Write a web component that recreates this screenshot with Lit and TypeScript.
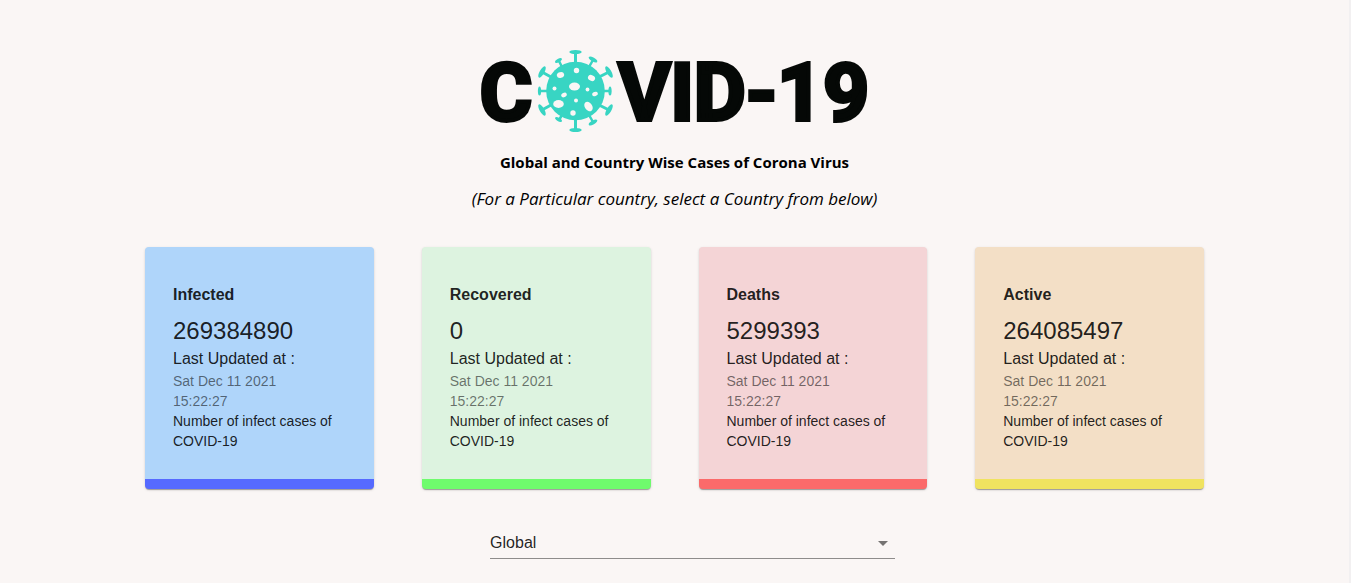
import { LitElement, html, css } from "lit";
import { customElement, property, state } from "lit/decorators.js";

interface Stat {
  kind: string;
  title: string;
  value: number;
}

const STATS: Stat[] = [
  { kind: "infected", title: "Infected", value: 269384890 },
  { kind: "recovered", title: "Recovered", value: 0 },
  { kind: "deaths", title: "Deaths", value: 5299393 },
  { kind: "active", title: "Active", value: 264085497 },
];

@customElement("covid-logo")
export class CovidLogo extends LitElement {
  static styles = css`
    :host {
      display: block;
    }
    .mark {
      display: flex;
      align-items: flex-start;
      justify-content: center;
      margin: 0;
      color: #050806;
      font: bold 80px/88px Roboto, "Liberation Sans", sans-serif;
      -webkit-text-stroke: 4px #050806;
      white-space: nowrap;
    }
    .virus {
      flex: none;
      width: 78px;
      height: 84px;
      margin: 0 4px;
    }
  `;

  render() {
    return html`
      <h1 class="mark" aria-label="COVID-19">
        <span>C</span>
        <svg class="virus" viewBox="0 0 78 84" aria-hidden="true">
          <g stroke="#38d5c3" fill="none" stroke-linecap="round">
            <path stroke-width="3" d="M39.500 15V3M39.500 69V81M15 28L6 23M63 28L73 23M15 56L6 61M63 56L73 61" />
            <path stroke-width="2.500" d="M26 18L23 12M53 18L57 11M26 66L23 71M53 66L57 73M12 42H4M67 42H74" />
          </g>
          <g fill="#38d5c3">
            <ellipse cx="39.500" cy="3" rx="6.200" ry="2" />
            <ellipse cx="39.500" cy="81" rx="6.200" ry="2" />
            <ellipse cx="6" cy="23" rx="6.400" ry="2.300" transform="rotate(-60 6 23)" />
            <ellipse cx="73" cy="23" rx="6.400" ry="2.300" transform="rotate(60 73 23)" />
            <ellipse cx="6" cy="61" rx="6.400" ry="2.300" transform="rotate(60 6 61)" />
            <ellipse cx="73" cy="61" rx="6.400" ry="2.300" transform="rotate(-60 73 61)" />
            <ellipse cx="22.500" cy="11.500" rx="3.800" ry="1.700" transform="rotate(-30 22.500 11.500)" />
            <ellipse cx="57" cy="10.500" rx="4.800" ry="1.900" transform="rotate(30 57 10.500)" />
            <ellipse cx="22.500" cy="70.500" rx="3.800" ry="1.700" transform="rotate(30 22.500 70.500)" />
            <ellipse cx="57" cy="73.500" rx="4.800" ry="1.900" transform="rotate(-30 57 73.500)" />
            <ellipse cx="3.500" cy="42" rx="1.600" ry="4.500" />
            <ellipse cx="74" cy="42" rx="1.600" ry="4.500" />
            <circle cx="39.500" cy="42" r="29.300" />
          </g>
          <g fill="#faf6f5">
            <ellipse cx="24.500" cy="26" rx="3.700" ry="2.900" transform="rotate(-15 24.500 26)" />
            <circle cx="40.500" cy="21.500" r="2.700" />
            <ellipse cx="55.500" cy="29" rx="3.700" ry="2.800" transform="rotate(25 55.500 29)" />
            <ellipse cx="38.500" cy="37.500" rx="5.500" ry="4" />
            <circle cx="18.500" cy="39.500" r="2" />
            <circle cx="51.500" cy="40.500" r="1.900" />
            <ellipse cx="59" cy="45" rx="2.900" ry="2" transform="rotate(-20 59 45)" />
            <ellipse cx="28" cy="46" rx="2.900" ry="2.100" transform="rotate(-25 28 46)" />
            <circle cx="40" cy="51.500" r="2" />
            <ellipse cx="22.500" cy="55" rx="5.300" ry="3.900" />
            <ellipse cx="52.500" cy="57.500" rx="3.700" ry="5.200" transform="rotate(-35 52.500 57.500)" />
            <circle cx="37" cy="64" r="2.700" />
          </g>
        </svg>
        <span>VID-19</span>
      </h1>
    `;
  }
}

@customElement("stat-card")
export class StatCard extends LitElement {
  static styles = css`
    :host {
      display: block;
    }
    .card {
      overflow: hidden;
      border-bottom: 10px solid var(--accent);
      border-radius: 4px;
      padding: 28px;
      background: var(--tint);
      box-shadow: 0 2px 1px -1px rgba(0, 0, 0, 0.2), 0 1px 1px rgba(0, 0, 0, 0.14), 0 1px 3px rgba(0, 0, 0, 0.12);
      color: rgba(0, 0, 0, 0.87);
      font: 14px/20px "Liberation Sans", Arial, sans-serif;
    }
    .title {
      margin: 8px 0;
      font-size: 16px;
      line-height: 24px;
    }
    .value,
    .caption,
    .date,
    .note {
      margin: 0;
    }
    .value {
      font-size: 24px;
      line-height: 32px;
    }
    .caption {
      font-size: 16px;
      line-height: 24px;
    }
    .date {
      color: rgba(0, 0, 0, 0.54);
    }
    .day,
    .time {
      display: block;
    }
  `;

  @property() title = "";
  @property({ type: Number }) value = 0;

  render() {
    return html`
      <article class="card">
        <h2 class="title">${this.title}</h2>
        <p class="value">${this.value}</p>
        <p class="caption">Last Updated at :</p>
        <p class="date"><span class="day">Sat Dec 11 2021</span><span class="time">15:22:27</span></p>
        <p class="note">Number of infect cases of COVID-19</p>
      </article>
    `;
  }
}

@customElement("app-root")
export class AppRoot extends LitElement {
  static styles = css`
    :host {
      display: block;
      box-sizing: border-box;
      min-height: 100vh;
      padding: 49px 24px 24px;
      border-right: 2px solid #f2f0f1;
      background: #faf6f5;
      color: #000;
      font: 16px/24px "Open Sans", "Segoe UI", sans-serif;
    }
    .intro {
      text-align: center;
    }
    .lead {
      margin: 13px 0 0;
      font-size: 15px;
      font-weight: 700;
    }
    .hint {
      margin: 13px 0 0;
      font-size: 17px;
      font-style: italic;
    }
    .cards {
      display: grid;
      grid-template-columns: repeat(auto-fit, minmax(200px, 1fr));
      gap: 48px;
      max-width: 1059px;
      margin: 36px auto 0;
    }
    .infected {
      --tint: #afd5fa;
      --accent: #566aff;
    }
    .recovered {
      --tint: #ddf3e0;
      --accent: #6ffb6d;
    }
    .deaths {
      --tint: #f4d4d6;
      --accent: #fb6a6a;
    }
    .active {
      --tint: #f3dfc6;
      --accent: #f0e360;
    }
    .filter {
      display: flex;
      justify-content: center;
      padding-left: 36px;
      margin-top: 39px;
    }
    .picker {
      display: grid;
      align-items: center;
      width: 32%;
      min-width: 240px;
      border-bottom: 1px solid #8e8c8b;
    }
    .select,
    .arrow {
      grid-area: 1 / 1;
    }
    .select {
      appearance: none;
      width: 100%;
      height: 30px;
      padding: 0 24px 0 0;
      border: 0;
      border-radius: 0;
      background: transparent;
      color: rgba(0, 0, 0, 0.87);
      font: 16px/24px "Liberation Sans", Arial, sans-serif;
    }
    .arrow {
      justify-self: end;
      width: 24px;
      height: 24px;
      fill: #757372;
      pointer-events: none;
    }
  `;

  @state() private country = "global";

  private pick(e: Event) {
    this.country = (e.target as HTMLSelectElement).value;
  }

  render() {
    return html`
      <header class="intro">
        <covid-logo></covid-logo>
        <p class="lead">Global and Country Wise Cases of Corona Virus</p>
        <p class="hint">(For a Particular country, select a Country from below)</p>
      </header>
      <main>
        <section class="cards">
          ${STATS.map((s) => html`<stat-card class=${s.kind} .title=${s.title} .value=${s.value}></stat-card>`)}
        </section>
        <div class="filter">
          <div class="picker">
            <select class="select" aria-label="Country" .value=${this.country} @change=${this.pick}>
              <option value="global">Global</option>
            </select>
            <svg class="arrow" viewBox="0 0 24 24" aria-hidden="true"><path d="M7 10l5 5 5-5z" /></svg>
          </div>
        </div>
      </main>
    `;
  }
}
